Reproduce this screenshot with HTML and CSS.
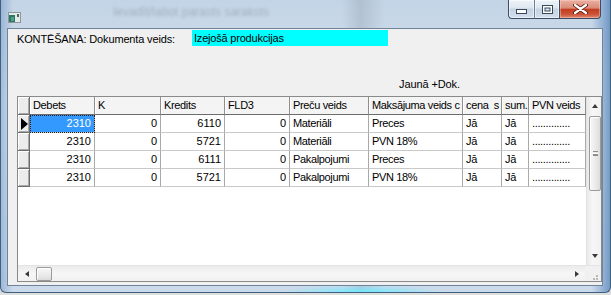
FILE: index.html
```html
<!DOCTYPE html>
<html lang="lv">
<head>
<meta charset="utf-8">
<title>Kontēšana</title>
<link rel="stylesheet" href="styles.css">
</head>
<body>
<div class="screen">
  <div class="window">
    <div class="titlebar">
      <svg class="appicon" width="13" height="11" viewBox="0 0 13 11">
        <rect x="0.5" y="0.5" width="12" height="10" fill="#e4ebe8" stroke="#8c9a96"/>
        <rect x="1" y="3" width="6" height="7" fill="#2e7565"/>
        <rect x="3" y="5" width="3" height="4" fill="#4fa08c"/>
        <rect x="9" y="2" width="2" height="3" fill="#55606a"/>
      </svg>
      <div class="ghost">Ievadīt/labot parasts saraksts</div>
      <div class="capbtns">
        <div class="cbtn cmin">
          <svg width="11" height="5" viewBox="0 0 11 5"><rect x="0.5" y="0.5" width="10" height="4" fill="#fff" stroke="#37475c"/></svg>
        </div>
        <div class="cbtn cmax">
          <svg width="11" height="9" viewBox="0 0 11 9"><rect x="0.5" y="0.5" width="10" height="8" fill="#fff" stroke="#37475c"/><rect x="3" y="3" width="5" height="3" fill="#dfe7f0" stroke="#37475c"/></svg>
        </div>
        <div class="cbtn cclose">
          <svg width="15" height="10" viewBox="0 0 15 10"><path d="M2 1 L13 9 M13 1 L2 9" stroke="#5a1a10" stroke-width="4" stroke-linecap="round"/><path d="M2 1 L13 9 M13 1 L2 9" stroke="#fff" stroke-width="2.2" stroke-linecap="round"/></svg>
        </div>
      </div>
    </div>
    <div class="client">
      <div class="toprow">
        <span class="label">KONTĒŠANA: Dokumenta veids:</span>
        <span class="doctype">Izejošā produkcijas</span>
      </div>
      <div class="newdoc">Jaunā +Dok.</div>
      <div class="grid">
        <div class="grid-main">
          <div class="table-area">
            <table class="data">
              <thead>
                <tr>
                  <th class="ind w-ind"></th>
                  <th class="w-deb">Debets</th>
                  <th class="w-k">K</th>
                  <th class="w-kred">Kredits</th>
                  <th class="w-fld">FLD3</th>
                  <th class="w-prec">Preču veids</th>
                  <th class="w-maks">Maksājuma veids c</th>
                  <th class="w-cena">cena&nbsp;&nbsp;s</th>
                  <th class="w-sum">sum.</th>
                  <th class="w-pvn">PVN veids</th>
                </tr>
              </thead>
              <tbody>
                <tr>
                  <td class="ind"><span class="arrow"></span></td>
                  <td class="num sel">2310</td>
                  <td class="num">0</td>
                  <td class="num">6110</td>
                  <td class="num">0</td>
                  <td>Materiāli</td>
                  <td>Preces</td>
                  <td>Jā</td>
                  <td>Jā</td>
                  <td>..............</td>
                </tr>
                <tr>
                  <td class="ind"></td>
                  <td class="num">2310</td>
                  <td class="num">0</td>
                  <td class="num">5721</td>
                  <td class="num">0</td>
                  <td>Materiāli</td>
                  <td>PVN 18%</td>
                  <td>Jā</td>
                  <td>Jā</td>
                  <td>..............</td>
                </tr>
                <tr>
                  <td class="ind"></td>
                  <td class="num">2310</td>
                  <td class="num">0</td>
                  <td class="num">6111</td>
                  <td class="num">0</td>
                  <td>Pakalpojumi</td>
                  <td>Preces</td>
                  <td>Jā</td>
                  <td>Jā</td>
                  <td>..............</td>
                </tr>
                <tr>
                  <td class="ind"></td>
                  <td class="num">2310</td>
                  <td class="num">0</td>
                  <td class="num">5721</td>
                  <td class="num">0</td>
                  <td>Pakalpojumi</td>
                  <td>PVN 18%</td>
                  <td>Jā</td>
                  <td>Jā</td>
                  <td>..............</td>
                </tr>
              </tbody>
            </table>
          </div>
          <div class="vscroll">
            <div class="sbtn"><span class="tri-up"></span></div>
            <div class="vthumb"><span class="grip-v"></span></div>
            <div class="vtrack"></div>
            <div class="sbtn"><span class="tri-down"></span></div>
          </div>
        </div>
        <div class="hscroll">
          <div class="hbtn"><span class="tri-left"></span></div>
          <div class="hthumb"></div>
          <div class="htrack"></div>
          <div class="hbtn"><span class="tri-right"></span></div>
          <div class="sizegrip">
            <svg width="15" height="16" viewBox="0 0 15 16"><g fill="#b9b9b9"><rect x="11" y="9" width="2" height="2"/><rect x="11" y="12" width="2" height="2"/><rect x="8" y="12" width="2" height="2"/></g></svg>
          </div>
        </div>
      </div>
    </div>
    <div class="bframe"></div>
  </div>
  <div class="desk"></div>
</div>
</body>
</html>
```
FILE: styles.css
```css
* { box-sizing: border-box; }
html, body { margin: 0; padding: 0; }
body {
  width: 611px;
  height: 295px;
  overflow: hidden;
  background: #d8d8d8;
  font-family: "Liberation Sans", Arial, sans-serif;
  font-size: 11px;
  color: #000;
}
.screen { width: 611px; height: 295px; display: flex; flex-direction: column; }

.window {
  height: 293px;
  display: flex;
  flex-direction: column;
  padding: 0 7px 0 6px;
  border: 1px solid #40607f;
  border-top: none;
  border-radius: 0 0 6px 6px;
  background:
    linear-gradient(to right, rgba(70,120,180,.35), rgba(255,255,255,0) 2%, rgba(255,255,255,0) 97%, rgba(40,100,170,.55)),
    linear-gradient(to right, rgba(0,0,0,0) 56%, rgba(90,100,115,.18) 59%, rgba(0,0,0,0) 63%),
    linear-gradient(#c3d4e6, #d6e2ee 35%, #cbdaea 100%);
}

/* title bar */
.titlebar { height: 28px; display: flex; align-items: flex-start; }
.appicon { margin: 12px 0 0 1px; flex: none; }
.ghost {
  flex: 1;
  margin: 5px 0 0 92px;
  font-size: 12px;
  color: rgba(50,60,80,.25);
  filter: blur(1.4px);
  white-space: nowrap;
  overflow: hidden;
}
.capbtns { display: flex; margin-right: 2px; flex: none; }
.cbtn {
  height: 19px;
  border: 1px solid #3b4d66;
  border-top: none;
  display: flex;
  align-items: center;
  justify-content: center;
}
.cmin {
  width: 26px;
  border-right: none;
  border-radius: 0 0 0 4px;
  padding-top: 5px;
  background: linear-gradient(#eef3f8 0%, #dde6f0 45%, #c5d3e2 50%, #d3deea 100%);
  box-shadow: inset 0 0 0 1px rgba(255,255,255,.55);
}
.cmax {
  width: 25px;
  border-right: none;
  border-left: 1px solid #6b7f96;
  background: linear-gradient(#eef3f8 0%, #dde6f0 45%, #c5d3e2 50%, #d3deea 100%);
  box-shadow: inset 0 0 0 1px rgba(255,255,255,.55);
}
.cclose {
  width: 42px;
  border-radius: 0 0 4px 0;
  background: linear-gradient(#eab0a2 0%, #db8a76 45%, #c23c21 52%, #cd5539 80%, #e08a70 100%);
  box-shadow: inset 0 0 0 1px rgba(255,220,210,.4);
}

/* client area */
.client {
  height: 258px;
  border: 1px solid #6f849a;
  background: #f0f0f0;
  padding: 1px 0 0 9px;
  display: flex;
  flex-direction: column;
}
.toprow { height: 16px; display: flex; align-items: center; }
.label { width: 175px; padding-top: 1px; letter-spacing: -0.15px; }
.doctype {
  width: 196px;
  height: 16px;
  line-height: 16px;
  background: #00ffff;
  padding-left: 2px;
  letter-spacing: -0.2px;
}
.newdoc {
  margin-top: 32px;
  height: 13px;
  line-height: 13px;
  padding-left: 382px;
  letter-spacing: -0.1px;
}

/* grid */
.grid {
  margin-top: 5px;
  width: 585px;
  height: 186px;
  border: 1px solid #8a8a8a;
  background: #fff;
  display: flex;
  flex-direction: column;
}
.grid-main { height: 168px; display: flex; }
.table-area { width: 568px; background: #fff; overflow: hidden; }
table.data {
  table-layout: fixed;
  width: 568px;
  border-collapse: separate;
  border-spacing: 0;
}
.data th, .data td {
  height: 18px;
  padding: 0 1px 0 3px;
  line-height: 17px;
  white-space: pre;
  overflow: hidden;
  font-weight: normal;
  text-align: left;
  font-size: 11px;
  letter-spacing: -0.35px;
}
.data th {
  background: #f4f4f4;
  border-right: 1px solid #8f8f8f;
  border-bottom: 1px solid #6d6d6d;
  box-shadow: inset 1px 0 0 #fff;
}
.data td {
  border-right: 1px solid #a9a9a9;
  border-bottom: 1px solid #c9c9c9;
}
.data td.num { text-align: right; padding: 0 3px 0 2px; letter-spacing: 0; }
.data .ind {
  padding: 0;
  background: #ececec;
  border-right: 1px solid #6d6d6d;
  border-bottom: 1px solid #6d6d6d;
  box-shadow: inset 1px 1px 0 #fff, inset -1px -1px 0 #a8a8a8;
}
.data td.sel {
  background: #3399ff;
  color: #fff;
  outline: 1px dotted #222;
  outline-offset: -1px;
}
.arrow {
  display: block;
  width: 0;
  height: 0;
  margin: 0 0 0 3px;
  border-left: 7px solid #000;
  border-top: 6px solid transparent;
  border-bottom: 6px solid transparent;
}

.w-ind { width: 12px; }
.w-deb { width: 65px; }
.w-k { width: 66px; }
.w-kred { width: 64px; }
.w-fld { width: 65px; }
.w-prec { width: 79px; }
.w-maks { width: 94px; }
.w-cena { width: 39px; }
.w-sum { width: 27px; }
.w-pvn { width: 57px; }

/* vertical scrollbar */
.vscroll {
  width: 15px;
  display: flex;
  flex-direction: column;
  background: linear-gradient(to right, #e9e9e9, #f6f6f6 40%, #f1f1f1);
  border-left: 1px solid #e2e2e2;
}
.sbtn { height: 18px; display: flex; align-items: center; justify-content: center; padding-left: 2px; }
.tri-up { width: 0; height: 0; border-left: 3px solid transparent; border-right: 3px solid transparent; border-bottom: 4px solid #3a3a3a; }
.tri-down { width: 0; height: 0; border-left: 3px solid transparent; border-right: 3px solid transparent; border-top: 4px solid #3a3a3a; }
.vthumb {
  height: 75px;
  margin: 1px 0 0 2px;
  border: 1px solid #9a9a9a;
  border-radius: 2px;
  background: linear-gradient(to right, #f7f7f7, #ececec 50%, #dcdcdc);
  box-shadow: inset 1px 1px 0 #fff;
  display: flex;
  align-items: center;
  justify-content: center;
}
.grip-v {
  width: 5px;
  height: 5px;
  border-top: 1px solid #8c8c8c;
  border-bottom: 1px solid #8c8c8c;
  background: linear-gradient(#fff 0 1px, #8c8c8c 1px 2px, transparent 2px) 0 1px / 5px 3px no-repeat;
}
.vtrack { flex: 1; }

/* horizontal scrollbar */
.hscroll {
  height: 16px;
  display: flex;
  background: linear-gradient(#ebebeb, #f6f6f6 50%, #f1f1f1);
  border-top: 1px solid #e4e4e4;
}
.hbtn { width: 17px; display: flex; align-items: center; justify-content: center; }
.tri-left { width: 0; height: 0; border-top: 3px solid transparent; border-bottom: 3px solid transparent; border-right: 4px solid #3a3a3a; }
.tri-right { width: 0; height: 0; border-top: 3px solid transparent; border-bottom: 3px solid transparent; border-left: 4px solid #3a3a3a; }
.hthumb {
  width: 16px;
  margin: 1px 0 0 1px;
  border: 1px solid #9a9a9a;
  border-radius: 2px;
  background: linear-gradient(#f7f7f7, #ececec 50%, #dcdcdc);
  box-shadow: inset 1px 1px 0 #fff;
}
.htrack { flex: 1; }
.sizegrip { width: 16px; background: #f0f0f0; }

/* bottom frame */
.bframe {
  height: 6px;
  background: radial-gradient(ellipse 80px 7px at 355px 100%, rgba(110,235,255,.95), rgba(110,235,255,0));
}
.desk { height: 2px; background: #dedede; }
```
